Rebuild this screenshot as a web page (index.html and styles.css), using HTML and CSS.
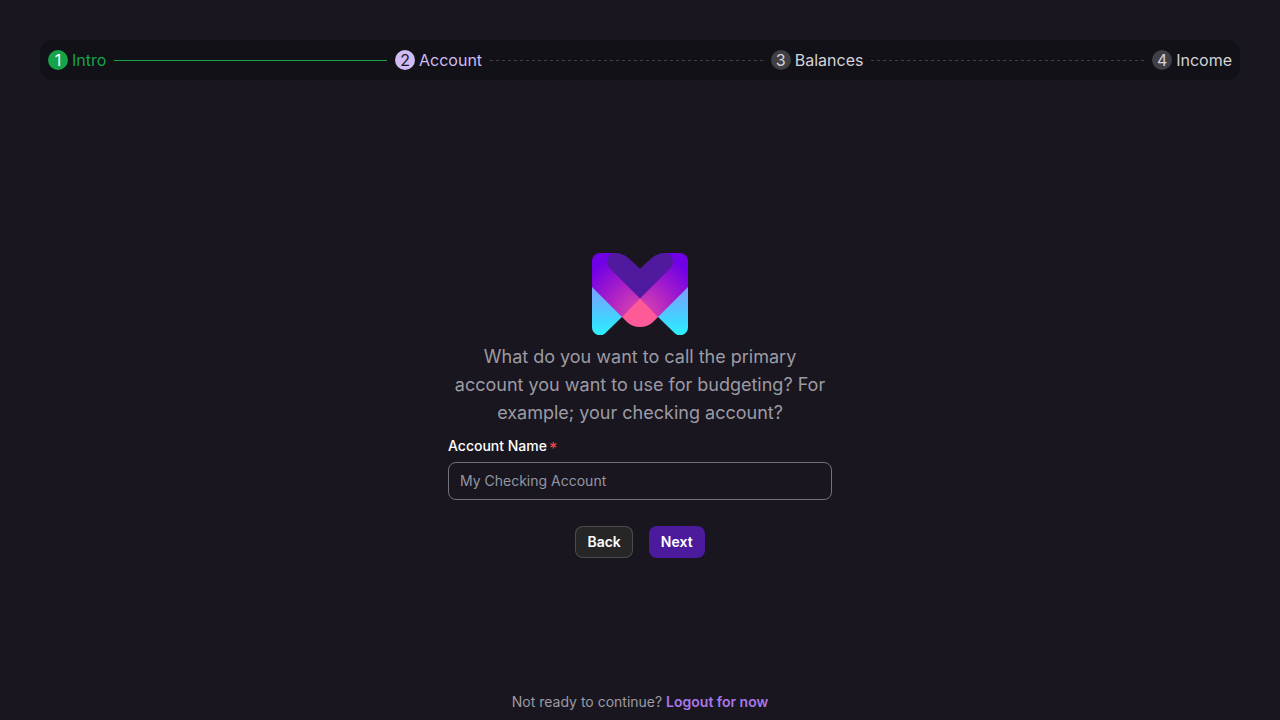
FILE: index.html
```html
<!DOCTYPE html>
<html lang="en">
<head>
<meta charset="utf-8">
<meta name="viewport" content="width=device-width, initial-scale=1">
<title>Account setup</title>
<link rel="stylesheet" href="styles.css">
</head>
<body>
<div class="page">
  <nav class="stepper" aria-label="Setup progress">
    <div class="step step-done"><span class="badge">1</span>Intro</div>
    <span class="line line-done"></span>
    <div class="step step-current" aria-current="step"><span class="badge">2</span>Account</div>
    <span class="line"></span>
    <div class="step"><span class="badge">3</span>Balances</div>
    <span class="line"></span>
    <div class="step"><span class="badge">4</span>Income</div>
  </nav>
  <main class="content">
    <form class="form">
      <svg class="logo" viewBox="0 0 96 82" role="img" aria-label="Logo">
        <defs>
          <linearGradient id="cyan" x1="0" y1="34" x2="0" y2="82" gradientUnits="userSpaceOnUse">
            <stop offset="0" stop-color="#7f9cff"/><stop offset=".72" stop-color="#3dd8ff"/><stop offset="1" stop-color="#2df0ff"/>
          </linearGradient>
          <radialGradient id="body" cx="48" cy="62" r="68" gradientUnits="userSpaceOnUse">
            <stop offset="0" stop-color="#e54ba8"/><stop offset=".5" stop-color="#a91fc8"/><stop offset=".95" stop-color="#7000e6"/>
          </radialGradient>
        </defs>
        <path fill="url(#cyan)" d="M0 33V74a8 8 0 0 0 14 5.500L31 63zM96 33V74a8 8 0 0 1-14 5.500L65 63z"/>
        <path fill="url(#body)" d="M8 0H22Q30 0 36 5L48 16 60 5Q66 0 74 0H88a8 8 0 0 1 8 8V34L66 64H30L0 34V8a8 8 0 0 1 8-8z"/>
        <path fill="#ff5a98" d="M48 45.500L66 64 61 69Q56 74 48 74T35 69L30 64z"/>
        <path fill="#501a9f" d="M48 16L60 5Q66 0 73 0A8.800 8.800 0 0 1 78.500 15L48 45.500 17.500 15A8.800 8.800 0 0 1 23 0Q30 0 36 5z"/>
      </svg>
      <p class="question">What do you want to call the primary account you want to use for budgeting? For example; your checking account?</p>
      <label class="label" for="name">Account Name<span class="required">*</span></label>
      <input class="input" id="name" type="text" placeholder="My Checking Account" required>
      <div class="actions">
        <button class="button button-back" type="button">Back</button>
        <button class="button button-next" type="submit">Next</button>
      </div>
    </form>
  </main>
  <footer class="footer">Not ready to continue? <a class="logout" href="#">Logout for now</a></footer>
</div>
</body>
</html>
```
FILE: styles.css
```css
* { box-sizing: border-box; }
body { margin: 0; background: #19161f; color: #d4d4d8; font: 16px/24px Inter, sans-serif; }
.page { display: flex; flex-direction: column; min-height: 100vh; padding: 40px 40px 8px; }
.stepper { display: flex; align-items: center; gap: 8px; padding: 8px; border-radius: 12px; background: #121117; }
.step { display: flex; align-items: center; gap: 4px; }
.badge { display: flex; align-items: center; justify-content: center; width: 20px; height: 20px; border-radius: 50%; background: #3f3f46; }
.line { flex: 1; height: 1px; background: repeating-linear-gradient(90deg, #3f3f46 0 3px, transparent 3px 6px); }
.line-done { background: #16a34a; }
.step-done { color: #16a34a; }
.step-done .badge { background: #16a34a; color: #fff; }
.step-current { color: #d0bbf4; }
.step-current .badge { background: #d0bbf4; color: #19161f; }
.content { flex: 1; display: flex; align-items: center; justify-content: center; padding-top: 39px; }
.form { display: flex; flex-direction: column; width: 100%; max-width: 384px; }
.logo { display: block; width: 96px; height: 82px; margin: 0 auto 8px; }
.question { margin: 0 0 8px; font-size: 18px; line-height: 28px; text-align: center; color: #9c9ba4; }
.label { display: flex; align-items: flex-start; gap: 2px; margin-bottom: 4px; font-size: 14px; font-weight: 500; line-height: 22px; color: #fff; }
.required { padding-top: 3px; font-size: 16px; color: #ef4444; line-height: 20px; }
.input { width: 100%; height: 38px; padding: 0 11px 1px; border: 1px solid #71717a; border-radius: 8px; background: transparent; color: #fff; font: 14px/24px Inter, sans-serif; }
.input::placeholder { color: #9296a3; opacity: 1; }
.actions { display: flex; justify-content: center; gap: 16px; margin-top: 26px; }
.button { height: 32px; padding: 0 12px; border: 0; border-radius: 8px; color: #fff; font: 600 14px/24px Inter, sans-serif; }
.button-back { background: #262626; box-shadow: inset 0 0 0 1px #4b4b50; }
.button-next { background: #4c1a9d; }
.footer { font-size: 14px; line-height: 20px; text-align: center; color: #9c9ba4; }
.logout { color: #a878e8; font-weight: 600; text-decoration: none; }
```
